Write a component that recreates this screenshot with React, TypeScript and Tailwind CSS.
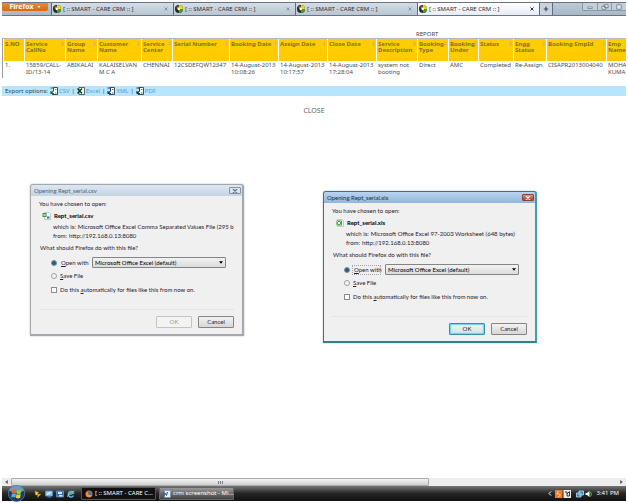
import React from "react";

const tabs = [
  { id: 1, active: false },
  { id: 2, active: false },
  { id: 3, active: false },
  { id: 4, active: true },
];

const columns = [
  { label: "S.NO", width: "w-[20px]", value: "1.", sort: false },
  { label: "Service CallNo", width: "w-[40px]", value: "15859/CALL-ID/13-14", sort: true },
  { label: "Group Name", width: "w-[31px]", value: "ABIKALAI", sort: true },
  { label: "Customer Name", width: "w-[43px]", value: "KALAISELVAN M C A", sort: true },
  { label: "Service Center", width: "w-[30px]", value: "CHENNAI", sort: true },
  { label: "Serial Number", width: "w-[56px]", value: "12CSDEFQW12347", sort: true },
  { label: "Booking Date", width: "w-[48px]", value: "14-August-2013 10:08:26", sort: true },
  { label: "Assign Date", width: "w-[48px]", value: "14-August-2013 10:17:57", sort: true },
  { label: "Close Date", width: "w-[48px]", value: "14-August-2013 17:28:04", sort: true },
  { label: "Service Description", width: "w-[40px]", value: "system not booting", sort: true },
  { label: "Booking Type", width: "w-[30px]", value: "Direct", sort: true },
  { label: "Booking Under", width: "w-[29px]", value: "AMC", sort: true },
  { label: "Status", width: "w-[34px]", value: "Completed", sort: true },
  { label: "Engg Status", width: "w-[32px]", value: "Re-Assign", sort: true },
  { label: "Booking EmpId", width: "w-[59px]", value: "CISAPR2013004040", sort: true },
  { label: "Emp Name", width: "w-[20px]", value: "MOHAN KUMAR", sort: false },
];

function SiteIcon() {
  return (
    <svg viewBox="0 0 16 16" className="size-[8px] shrink-0" aria-hidden="true">
      <circle cx="8" cy="8" r="8" fill="#23301f" />
      <path d="M8 8V0a8 8 0 0 1 8 8z" fill="#f2d21b" />
      <path d="M8 8h8a8 8 0 0 1-8 8z" fill="#4d9a2c" />
      <path d="M8 8H0a8 8 0 0 1 6-7.700z" fill="#173a22" />
      <path d="M3 3h5v5H4z" fill="#e87422" />
      <circle cx="7.500" cy="8" r="2.400" fill="#fff" />
    </svg>
  );
}

function TabBar() {
  return (
    <header className="flex h-[14px] items-stretch border-t border-b border-[#687482] bg-gradient-to-b from-[#bec9d6] to-[#a9b7c7]">
      <div className="w-[49px] shrink-0">
        <button className="flex h-[8px] w-[46px] items-center justify-center gap-[3px] rounded-b-[2px] bg-gradient-to-b from-[#e78a3c] to-[#d9660f] text-[7px] leading-[8px] font-bold text-white">
          Firefox
          <svg viewBox="0 0 6 4" className="h-[2px] w-[4px]" aria-hidden="true">
            <path d="M0 0h6L3 4z" fill="#fff" />
          </svg>
        </button>
      </div>
      <nav className="flex min-w-0 flex-1" aria-label="Tabs">
        {tabs.map((tab) => (
          <div
            key={tab.id}
            className={
              "flex w-[122px] items-center gap-[2px] border-l pr-[4px] pl-px text-[6px] leading-[12px] text-[#27303b] " +
              (tab.active
                ? "border-[#5d6b7b] bg-gradient-to-b from-white to-[#e6edf6]"
                : "border-[#5d6b7b] bg-gradient-to-b from-[#d5dde6] to-[#b9c5d2]")
            }
          >
            <SiteIcon />
            <a href="#report" className="flex-1 whitespace-nowrap">[ :: SMART - CARE CRM :: ]</a>
            <button aria-label="Close tab" className="flex size-[6px] items-center justify-center">
              <svg viewBox="0 0 8 8" className={tab.active ? "size-[4px] text-[#333]" : "size-[4px] text-[#8793a1]"} aria-hidden="true">
                <path d="M1 1l6 6M7 1L1 7" stroke="currentColor" strokeWidth="2" />
              </svg>
            </button>
          </div>
        ))}
        <button aria-label="New tab" className="flex w-[14px] items-center justify-center border-x border-[#5d6b7b] bg-[#c9d3de]">
          <svg viewBox="0 0 8 8" className="size-[6px]" aria-hidden="true">
            <path d="M4 1v6M1 4h6" stroke="#3c4650" strokeWidth="1.600" />
          </svg>
        </button>
      </nav>
      <div className="flex h-[8px] w-[44px] shrink-0 divide-x divide-[#8b98a7] rounded-bl-[2px] border-b border-l border-[#8b98a7] bg-[#c3cedb]">
        <button aria-label="Minimize" className="flex flex-1 items-center justify-center">
          <svg viewBox="0 0 10 8" className="h-[6px] w-[8px]" aria-hidden="true">
            <path d="M2 4h6v2H2z" fill="#fff" stroke="#687482" />
          </svg>
        </button>
        <button aria-label="Restore" className="flex flex-1 items-center justify-center">
          <svg viewBox="0 0 10 8" className="h-[6px] w-[8px]" aria-hidden="true">
            <path d="M4 1h5v4H4zM1 3h5v4H1z" fill="#fff" stroke="#586472" />
          </svg>
        </button>
        <button aria-label="Close window" className="flex flex-1 items-center justify-center">
          <svg viewBox="0 0 10 8" className="h-[6px] w-[8px]" aria-hidden="true">
            <path d="M2 1h6v6H2z" fill="#dfe6ee" stroke="#687482" />
          </svg>
        </button>
      </div>
    </header>
  );
}

function ReportTable() {
  return (
    <div className="overflow-hidden border-t border-[#b9b9b9] border-l border-l-[#999]">
      <table className="w-[625px] table-fixed border-separate border-spacing-x-px border-spacing-y-0 text-left text-[6px] text-[#4d4d4d]">
        <thead>
          <tr>
            {columns.map((c) => (
              <th key={c.label} scope="col" className={"h-[22px] bg-[#ffcc00] px-px pt-[2px] align-top leading-[6px] font-bold text-[#86722c] " + c.width}>
                <div className="flex items-start justify-between">
                  <span>{c.label}</span>
                  {c.sort && (
                    <svg viewBox="0 0 4 6" className="-ml-[3px] h-[5px] w-[3px] shrink-0" aria-hidden="true">
                      <path d="M0 2.500L2 0l2 2.500zM0 3.500h4L2 6z" fill="#d0b35c" />
                    </svg>
                  )}
                </div>
              </th>
            ))}
          </tr>
        </thead>
        <tbody>
          <tr>
            {columns.map((c) => (
              <td key={c.label} className="h-[17px] px-px pt-px align-top leading-[7px]">
                {c.value}
              </td>
            ))}
          </tr>
        </tbody>
      </table>
    </div>
  );
}

function ExportIcon({ color }: { color: string }) {
  return (
    <svg viewBox="0 0 16 16" className="size-[8px]" aria-hidden="true">
      <path d="M6 1h9v14H4" fill="#fff" stroke="#263f35" strokeWidth="1.800" />
      <path d="M1 2h6v6M7 8l-5 5M2 8v5h6" fill="none" stroke={color} strokeWidth="2.200" />
      <path d="M10 5h3M10 12h3" stroke={color} strokeWidth="1.500" />
    </svg>
  );
}

function ExcelExportIcon() {
  return (
    <svg viewBox="0 0 16 16" className="size-[8px]" aria-hidden="true">
      <path d="M4 1h11v14H4z" fill="#fff" stroke="#263f35" strokeWidth="1.500" />
      <path d="M1 3l9 10M10 3L1 13" stroke="#123d20" strokeWidth="3" />
    </svg>
  );
}

const exportsList = [
  { name: "CSV", icon: <ExportIcon color="#29634a" /> },
  { name: "Excel", icon: <ExcelExportIcon /> },
  { name: "XML", icon: <ExportIcon color="#233c6a" /> },
  { name: "PDF", icon: <ExportIcon color="#173d2a" /> },
];

function ExportBar() {
  return (
    <div className="mt-[8px] flex h-[10px] items-center gap-[2px] bg-[#b7e5ff] pl-[3px] text-[6px] leading-[8px] text-[#34424b]">
      <span>Export options:</span>
      {exportsList.map((e, i) => (
        <React.Fragment key={e.name}>
          {i > 0 && <span>|</span>}
          <a href={"#" + e.name} className="flex items-center gap-px text-[#5b9fbd]">
            {e.icon}
            {e.name}
          </a>
        </React.Fragment>
      ))}
    </div>
  );
}

function FileIcon({ kind }: { kind: "csv" | "xls" }) {
  return (
    <svg viewBox="0 0 18 16" className="h-[8px] w-[9px]" aria-hidden="true">
      <path d="M5 1h9l3 3v11H5z" fill="#f4f8f4" stroke="#8aa0a8" />
      {kind === "csv" ? (
        <>
          <path d="M1 2h8v8H1z" fill="#399b43" />
          <path d="M3 4l4 4M7 4L3 8" stroke="#fff" strokeWidth="1.500" />
          <path d="M10 9h5v4h-5z" fill="#39749e" />
        </>
      ) : (
        <>
          <path d="M3 3h11v10H3z" fill="#4c9e49" />
          <path d="M5 5l6 6M11 5l-6 6" stroke="#fff" strokeWidth="2" />
        </>
      )}
    </svg>
  );
}

type DialogProps = {
  file: string;
  kind: "csv" | "xls";
  type: string;
  active: boolean;
};

function OpenDialog({ file, kind, type, active }: DialogProps) {
  const buttonStyle = "h-[12px] w-[36px] rounded-[1px] border text-center leading-[10px] ";
  return (
    <section
      aria-label={"Opening " + file}
      className={
        "w-[214px] shrink-0 rounded-t-[3px] border border-r-2 border-b-2 font-[family-name:Lato] text-[6px] leading-[8px] text-[#29202c] shadow-[0_0_2px_#bbb] " +
        (active ? "border-[#3d7480] border-r-[#40a0a8] border-b-[#358087] bg-[#a9c6e5]" : "border-[#a4a7ab] bg-[#cfdbe8]")
      }
    >
      <div
        className={
          "flex h-[11px] items-center justify-between rounded-t-[2px] pr-px pl-[3px] " +
          (active ? "bg-gradient-to-b from-[#b9d4ee] to-[#91b6dc] text-[#1c2c42]" : "bg-gradient-to-b from-[#dce7f2] to-[#c3d4e6] text-[#52606f]")
        }
      >
        <h2>Opening {file}</h2>
        <button
          aria-label="Close dialog"
          className={
            "flex h-[7px] w-[12px] items-center justify-center rounded-[1px] border " +
            (active ? "border-[#8e4237] bg-gradient-to-b from-[#df8f80] to-[#b93621] text-white" : "border-[#8493a3] bg-[#dce5ef] text-[#657384]")
          }
        >
          <svg viewBox="0 0 8 6" className="h-[4px] w-[6px]" aria-hidden="true">
            <path d="M1 0l6 6M7 0L1 6" stroke="currentColor" strokeWidth="2" />
          </svg>
        </button>
      </div>
      <form className="h-[138px] bg-[#f0f0f0] px-[8px] pt-[4px]" onSubmit={(e) => e.preventDefault()}>
        <p>You have chosen to open:</p>
        <div className="mt-[4px] flex items-center gap-[3px] pl-[3px] font-bold text-black">
          <FileIcon kind={kind} />
          {file}
        </div>
        <dl className="mt-[2px] overflow-hidden pl-[14px] leading-[9px] whitespace-nowrap">
          <div className="flex gap-[2px]">
            <dt>which is:</dt>
            <dd>{type}</dd>
          </div>
          <div className="flex gap-[2px]">
            <dt>from:</dt>
            <dd>http://192.168.0.13:8080</dd>
          </div>
        </dl>
        <fieldset className="mt-[4px] h-[66px] border-b border-[#e4e4e4] pl-px">
          <legend>What should Firefox do with this file?</legend>
          <div className="mt-[5px] flex items-center pl-[11px]">
            <input id={kind + "-open"} name={kind + "-action"} type="radio" defaultChecked className="size-[6px] appearance-none rounded-full border border-[#80909a] bg-white checked:bg-[#246080]" />
            <label htmlFor={kind + "-open"} className={"ml-[2px] w-[29px] border px-px whitespace-nowrap " + (active ? "border-dotted border-[#a8a0aa]" : "border-transparent")}>
              <u>O</u>pen with
            </label>
            <div className="relative ml-[4px]">
              <select aria-label="Application" className="block h-[11px] w-[134px] appearance-none rounded-[1px] border border-[#858585] bg-gradient-to-b from-[#f2f2f2] to-[#dcdcdc] pl-[2px] leading-[9px] text-black">
                <option>Microsoft Office Excel (default)</option>
              </select>
              <svg viewBox="0 0 6 4" className="pointer-events-none absolute top-[4px] right-[3px] h-[3px] w-[4px]" aria-hidden="true">
                <path d="M0 0h6L3 4z" fill="#000" />
              </svg>
            </div>
          </div>
          <div className="mt-[4px] flex items-center gap-[3px] pl-[11px]">
            <input id={kind + "-save"} name={kind + "-action"} type="radio" className="size-[6px] appearance-none rounded-full border border-[#9a9fa3] bg-[#f7f7f7]" />
            <label htmlFor={kind + "-save"}>
              <u>S</u>ave File
            </label>
          </div>
          <div className="mt-[6px] flex items-center gap-[3px] pl-[11px]">
            <input id={kind + "-auto"} type="checkbox" className="size-[6px] appearance-none border border-[#858c92] bg-white" />
            <label htmlFor={kind + "-auto"}>
              Do this <u>a</u>utomatically for files like this from now on.
            </label>
          </div>
        </fieldset>
        <div className="mt-[6px] flex justify-end gap-[6px]">
          <button
            disabled={!active}
            className={buttonStyle + (active ? "border-[#3c8fac] bg-gradient-to-b from-[#f0f6f8] to-[#d3e1e8] shadow-[inset_0_0_1px_1px_#6bd0ef]" : "border-[#c2c5c8] bg-[#f3f3f3] text-[#999]")}
          >
            OK
          </button>
          <button className={buttonStyle + "border-[#858585] bg-gradient-to-b from-[#f3f3f3] to-[#d7d7d7]"}>Cancel</button>
        </div>
      </form>
    </section>
  );
}

function Scrollbar() {
  return (
    <div className="flex h-[8px] items-center bg-[#ededed]">
      <button aria-label="Scroll left" className="flex w-[9px] shrink-0 justify-center">
        <svg viewBox="0 0 4 6" className="h-[4px] w-[3px]" aria-hidden="true">
          <path d="M4 0v6L0 3z" fill="#555" />
        </svg>
      </button>
      <div className="flex h-full flex-1">
        <div className="flex w-[69%] items-center justify-center gap-px rounded-[1px] border border-[#aaa] bg-gradient-to-b from-[#f5f5f5] to-[#cfcfcf]">
          <span className="h-[3px] w-px bg-[#777]" />
          <span className="h-[3px] w-px bg-[#777]" />
          <span className="h-[3px] w-px bg-[#777]" />
        </div>
      </div>
      <button aria-label="Scroll right" className="flex w-[9px] shrink-0 justify-center">
        <svg viewBox="0 0 4 6" className="h-[4px] w-[3px]" aria-hidden="true">
          <path d="M0 0v6l4-3z" fill="#555" />
        </svg>
      </button>
    </div>
  );
}

function Taskbar() {
  const task = "flex h-[13px] w-[75px] items-center gap-[2px] rounded-[1px] border px-[3px] whitespace-nowrap ";
  return (
    <footer className="flex h-[15px] items-center bg-gradient-to-b from-[#777] via-[#262626] via-50% to-[#111] text-[6px] leading-[9px] text-white">
      <button aria-label="Start" className="ml-[5px] shrink-0">
        <svg viewBox="0 0 36 32" className="h-[17px] w-[19px]" aria-hidden="true">
          <circle cx="18" cy="16" r="15.500" fill="#163d63" stroke="#8caabd" />
          <path d="M4 11a15 15 0 0 1 28 0q-14 7-28 0z" fill="#6e9cb8" />
          <path d="M10 9q4-3 8 0l-1 7q-4-3-8 0z" fill="#ed6335" />
          <path d="M19 10q4 2 8-1l-1 7q-4 3-8 0z" fill="#9acb45" />
          <path d="M9 17q4-3 8 0l-1 7q-4-3-8 0z" fill="#52aee5" />
          <path d="M18 17q4 3 8 0l-1 7q-4 3-8 0z" fill="#f7cf3d" />
        </svg>
      </button>
      <div className="ml-[8px] flex w-[43px] shrink-0 items-center gap-[3px]">
        <svg viewBox="0 0 16 16" className="size-[8px]" aria-hidden="true">
          <path d="M2 2l7 3-2 4 7-1-7 7 1-5H3z" fill="#f3d528" stroke="#a38618" />
        </svg>
        <svg viewBox="0 0 16 16" className="size-[8px]" aria-hidden="true">
          <path d="M1 2h14v10H1zM5 14h7" fill="#9ec8e8" stroke="#4b8ac0" strokeWidth="2" />
          <path d="M4 9l7-5" stroke="#fff" strokeWidth="2" />
        </svg>
        <svg viewBox="0 0 16 16" className="size-[8px]" aria-hidden="true">
          <path d="M1 2h14v12H1z" fill="#2e6cb4" stroke="#8dbce6" />
          <path d="M4 4h8v4H4zM6 10h7v3H6z" fill="#d6eaff" />
        </svg>
        <svg viewBox="0 0 16 16" className="size-[8px]" aria-hidden="true">
          <path d="M13 11a5.500 5.500 0 1 1 0-5l-8 3" fill="none" stroke="#54b8f0" strokeWidth="3" />
          <path d="M1 14Q3 5 15 2" fill="none" stroke="#e8cc58" strokeWidth="1.500" />
        </svg>
      </div>
      <div className="ml-[4px] flex gap-[3px]">
        <button className={task + "border-[#555] bg-[#111]"}>
          <svg viewBox="0 0 16 16" className="size-[8px] shrink-0" aria-hidden="true">
            <circle cx="8" cy="8" r="7" fill="#e8632b" />
            <circle cx="9" cy="7" r="4" fill="#3474ad" />
            <path d="M2 5q5-1 5 4 3 3 7 0-2 6-7 5T2 5z" fill="#f19a2f" />
          </svg>
          [ :: SMART - CARE C...
        </button>
        <button className={task + "border-[#666] bg-gradient-to-b from-[#999] to-[#444]"}>
          <svg viewBox="0 0 16 16" className="size-[8px] shrink-0" aria-hidden="true">
            <path d="M3 1h12v14H3z" fill="#e9f2ff" stroke="#6389bf" />
            <path d="M1 4l2 7 2-5 2 5 2-7" fill="none" stroke="#2858a5" strokeWidth="2" />
          </svg>
          crm screenshot - Mi...
        </button>
      </div>
      <div className="mr-[7px] ml-auto flex items-center gap-[3px]">
        <svg viewBox="0 0 8 10" className="h-[5px] w-[4px]" aria-hidden="true">
          <path d="M6 1L2 5l4 4" fill="none" stroke="#fff" strokeWidth="2" />
        </svg>
        <svg viewBox="0 0 32 16" className="h-[8px] w-[16px]" aria-hidden="true">
          <path d="M0 0h15v16H0z" fill="#f47b20" />
          <path d="M7 2q-6 6 0 6t0 6" fill="none" stroke="#fff" strokeWidth="1.500" />
          <path d="M17 0h15v16H17z" fill="#eee" />
          <path d="M20 4h4v8M24 8l5-5v9h-5" fill="none" stroke="#333" strokeWidth="2" />
        </svg>
        <svg viewBox="0 0 34 16" className="ml-[2px] h-[8px] w-[17px]" aria-hidden="true">
          <path d="M6 2h9v8H6zM1 6h9v8H1z" fill="#3184ca" stroke="#c7e6fc" strokeWidth="1.500" />
          <path d="M19 6h3l5-4v12l-5-4h-3z" fill="#fff" />
          <path d="M29 4q4 4 0 9" fill="none" stroke="#57bd55" strokeWidth="2" />
        </svg>
        <time className="whitespace-nowrap">3:41 PM</time>
      </div>
    </footer>
  );
}

export default function App() {
  return (
    <div className="flex min-h-screen flex-col bg-white px-[2px] py-[2px] font-['Noto_Sans',sans-serif]">
      <TabBar />
      <main className="flex-1">
        <h1 className="mt-[14px] pl-[414px] text-[6px] leading-[8px] text-[#444]">REPORT</h1>
        <ReportTable />
        <ExportBar />
        <div className="mt-[10px] text-center text-[7px] leading-[9px] text-[#666]">
          <button>CLOSE</button>
        </div>
        <div className="mt-[69px] flex items-start gap-[79px] pl-[28px]">
          <OpenDialog file="Rept_serial.csv" kind="csv" type="Microsoft Office Excel Comma Separated Values File (295 b" active={false} />
          <div className="pt-[7px]">
            <OpenDialog file="Rept_serial.xls" kind="xls" type="Microsoft Office Excel 97-2003 Worksheet (648 bytes)" active />
          </div>
        </div>
      </main>
      <Scrollbar />
      <Taskbar />
    </div>
  );
}
